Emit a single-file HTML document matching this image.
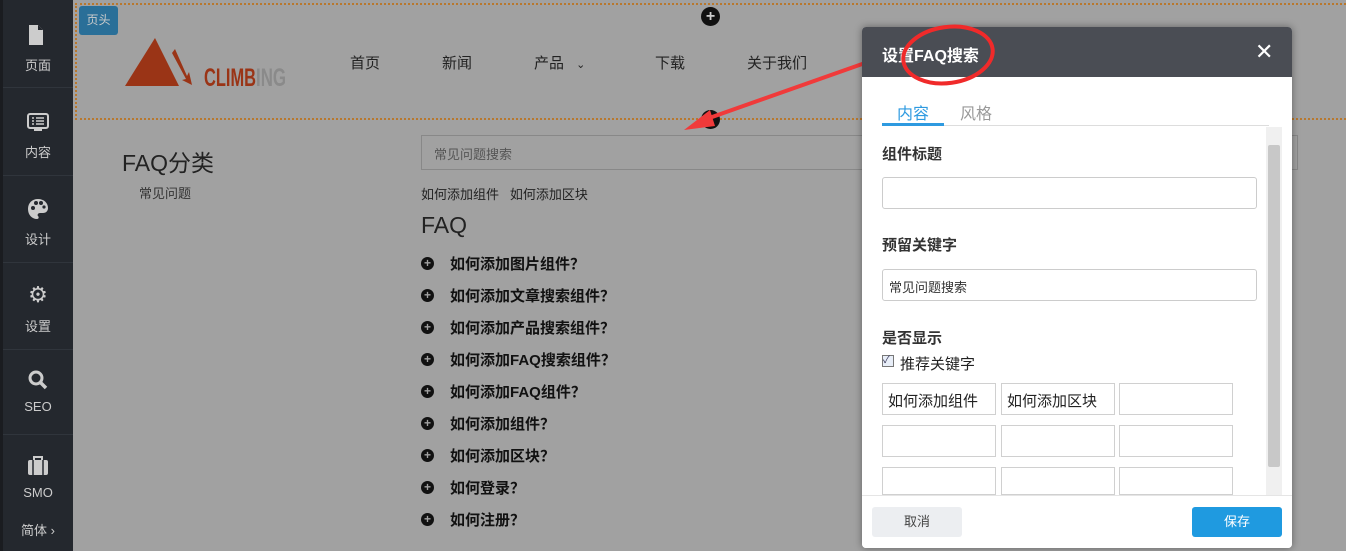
<!DOCTYPE html>
<html><head><meta charset="utf-8"><style>
*{margin:0;padding:0;box-sizing:border-box}
body{width:1346px;height:551px;overflow:hidden;background:#a1a1a1;font-family:"Liberation Sans","Noto Sans CJK SC",sans-serif;position:relative;color:#222}
.a{position:absolute}
.sb{left:0;top:0;width:73px;height:551px;background:#24282e;border-left:3px solid #1a1c20}
.it{position:absolute;left:0;width:70px;text-align:center;color:#ccc;font-size:13px}
.sep{position:absolute;left:0;width:70px;height:1px;background:#30353c}
.hdr{left:75px;top:3px;width:1275px;height:117px;border:2px dotted #b8782e}
.nav{font-size:15px;color:#222;top:52px}
.faq{font-size:15px;font-weight:bold;color:#111;left:450px}
.pl{position:absolute;left:421px;width:13px;height:13px;border-radius:50%;background:#111;color:#a1a1a1;font-size:12px;line-height:13px;text-align:center;font-weight:bold}
.dlg{left:862px;top:27px;width:430px;height:521px;background:#fff;border-radius:4px;box-shadow:0 0 8px rgba(0,0,0,.4);overflow:hidden}
.inp{position:absolute;border:1px solid #ccc;border-radius:3px;background:#fff;font-size:13px;color:#333}
.lab{position:absolute;left:20px;font-size:15px;font-weight:bold;color:#333}
.cell{position:absolute;border:1px solid #d0d0d0;background:#fff;width:114px;height:32px;font-size:15px;color:#222;padding:6px 0 0 5px}
</style></head><body>
<div class="a sb">
<svg class="a" style="left:24px;top:25px" width="18" height="20" viewBox="0 0 18 20"><path d="M2 0h9l5 5v15H2z" fill="#ccc"/><path d="M11 0v5h5" fill="#24282e"/></svg>
<div class="it" style="top:55px">页面</div><div class="sep" style="top:87px"></div>
<svg class="a" style="left:24px;top:113px" width="22" height="20"><rect x="1" y="1" width="20" height="14" rx="2" fill="none" stroke="#ccc" stroke-width="2"/><path d="M5 5h2M9 5h8M5 8h2M9 8h8M5 11h2M9 11h8" stroke="#ccc" stroke-width="1.5"/><rect x="7" y="16" width="8" height="2" fill="#ccc"/></svg>
<div class="it" style="top:142px">内容</div><div class="sep" style="top:175px"></div>
<svg class="a" style="left:24px;top:198px" width="22" height="22" viewBox="0 0 22 22"><path d="M11 1C5 1 1 5 1 11s4 10 9 10c2 0 2-2 1-3s0-3 2-3h3c3 0 5-2 5-5C21 5 17 1 11 1z" fill="#ccc"/><circle cx="6" cy="10" r="2" fill="#24282e"/><circle cx="9" cy="5" r="2" fill="#24282e"/><circle cx="14" cy="5" r="2" fill="#24282e"/><circle cx="17" cy="9" r="1.6" fill="#24282e"/></svg>
<div class="it" style="top:229px">设计</div><div class="sep" style="top:262px"></div>
<div class="it" style="top:282px;font-size:22px">⚙</div>
<div class="it" style="top:316px">设置</div><div class="sep" style="top:349px"></div>
<svg class="a" style="left:25px;top:370px" width="20" height="20"><circle cx="8" cy="8" r="6" fill="none" stroke="#ccc" stroke-width="3"/><path d="M12 12l6 6" stroke="#ccc" stroke-width="3.5"/></svg>
<div class="it" style="top:399px">SEO</div><div class="sep" style="top:434px"></div>
<svg class="a" style="left:24px;top:456px" width="22" height="20"><rect x="1" y="4" width="20" height="15" rx="2" fill="#ccc"/><rect x="7" y="1" width="8" height="4" fill="none" stroke="#ccc" stroke-width="2"/><path d="M6 4v15M16 4v15" stroke="#24282e" stroke-width="1.5"/></svg>
<div class="it" style="top:485px">SMO</div>
<div class="it" style="top:520px">简体 ›</div>
</div>
<div class="a hdr"></div>
<div class="a" style="left:79px;top:6px;width:39px;height:29px;background:#2a6f98;border-radius:3px;color:#ccc;font-size:12px;text-align:center;line-height:29px">页头</div>
<div class="a" style="left:701px;top:7px;width:19px;height:19px;border-radius:50%;background:#111;color:#ccc;text-align:center;line-height:19px;font-weight:bold">+</div>
<div class="a" style="left:701px;top:110px;width:19px;height:19px;border-radius:50%;background:#111"></div>
<svg class="a" style="left:124px;top:36px" width="170" height="52"><path d="M1 50L31 2L55 50z" fill="#9a3416"/><path d="M48 17l3-4 12 27 2-4 3 13-10-5 4-1z" fill="#9a3416"/><text x="80" y="50" font-family="Liberation Sans" font-weight="bold" font-size="25" fill="#9a3416" textLength="52" lengthAdjust="spacingAndGlyphs">CLIMB</text><text x="132" y="50" font-family="Liberation Sans" font-weight="bold" font-size="25" fill="#8a8a8a" textLength="30" lengthAdjust="spacingAndGlyphs">ING</text></svg>
<div class="a nav" style="left:350px">首页</div>
<div class="a nav" style="left:442px">新闻</div>
<div class="a nav" style="left:534px">产品 <span style="font-size:11px;margin-left:8px">⌄</span></div>
<div class="a nav" style="left:655px">下载</div>
<div class="a nav" style="left:747px">关于我们</div>
<div class="a" style="left:122px;top:144px;font-size:23px;color:#222">FAQ分类</div>
<div class="a" style="left:139px;top:183px;font-size:13px;color:#333">常见问题</div>
<div class="a" style="left:421px;top:135px;width:877px;height:35px;border:1px solid #888;font-size:13px;color:#555;padding:8px 12px">常见问题搜索</div>
<div class="a" style="left:421px;top:184px;font-size:13px;color:#222">如何添加组件&nbsp;&nbsp;&nbsp;如何添加区块</div>
<div class="a" style="left:421px;top:212px;font-size:23px;color:#222">FAQ</div>
<div class="pl" style="top:257px">+</div><div class="a faq" style="top:253px">如何添加图片组件？</div>
<div class="pl" style="top:289px">+</div><div class="a faq" style="top:285px">如何添加文章搜索组件？</div>
<div class="pl" style="top:321px">+</div><div class="a faq" style="top:317px">如何添加产品搜索组件？</div>
<div class="pl" style="top:353px">+</div><div class="a faq" style="top:349px">如何添加FAQ搜索组件？</div>
<div class="pl" style="top:385px">+</div><div class="a faq" style="top:381px">如何添加FAQ组件？</div>
<div class="pl" style="top:417px">+</div><div class="a faq" style="top:413px">如何添加组件？</div>
<div class="pl" style="top:449px">+</div><div class="a faq" style="top:445px">如何添加区块？</div>
<div class="pl" style="top:481px">+</div><div class="a faq" style="top:477px">如何登录？</div>
<div class="pl" style="top:513px">+</div><div class="a faq" style="top:509px">如何注册？</div>
<svg class="a" style="left:680px;top:60px" width="190" height="75"><path d="M185 3L18 62" stroke="#f03a3a" stroke-width="4"/><path d="M4 70L30 50L35 66z" fill="#f03a3a"/></svg>
<div class="a dlg">
<div class="a" style="left:0;top:0;width:430px;height:50px;background:#4a4d54"></div>
<div class="a" style="left:20px;top:15px;font-size:16px;font-weight:bold;color:#fff">设置FAQ搜索</div>
<div class="a" style="left:393px;top:12px;font-size:22px;color:#fff">✕</div>
<div class="a" style="left:35px;top:73px;font-size:16px;color:#2e9ae0">内容</div>
<div class="a" style="left:98px;top:73px;font-size:16px;color:#999">风格</div>
<div class="a" style="left:20px;top:96px;width:62px;height:3px;background:#2e9ae0"></div>
<div class="a" style="left:82px;top:98px;width:325px;height:1px;background:#ddd"></div>
<div class="a" style="left:404px;top:100px;width:16px;height:368px;background:#f0f0f0"></div>
<div class="a" style="left:406px;top:118px;width:12px;height:322px;background:#c8c8c8;border-radius:2px"></div>
<div class="lab" style="top:116px">组件标题</div>
<div class="inp" style="left:20px;top:150px;width:375px;height:32px"></div>
<div class="lab" style="top:207px">预留关键字</div>
<div class="inp" style="left:20px;top:242px;width:375px;height:32px;padding:7px 6px">常见问题搜索</div>
<div class="lab" style="top:300px">是否显示</div>
<div class="a" style="left:20px;top:328px;width:12px;height:12px;border:1px solid #777;background:#e8eef8;font-size:10px;line-height:10px;color:#335">✓</div>
<div class="a" style="left:38px;top:326px;font-size:15px;color:#222">推荐关键字</div>
<div class="cell" style="left:20px;top:356px">如何添加组件</div>
<div class="cell" style="left:139px;top:356px">如何添加区块</div>
<div class="cell" style="left:257px;top:356px"></div>
<div class="cell" style="left:20px;top:398px"></div>
<div class="cell" style="left:139px;top:398px"></div>
<div class="cell" style="left:257px;top:398px"></div>
<div class="cell" style="left:20px;top:440px;height:28px"></div>
<div class="cell" style="left:139px;top:440px;height:28px"></div>
<div class="cell" style="left:257px;top:440px;height:28px"></div>
<div class="a" style="left:0;top:468px;width:430px;height:53px;background:#fff;border-top:1px solid #e5e5e5"></div>
<div class="a" style="left:10px;top:480px;width:90px;height:30px;background:#eceef1;border-radius:3px;text-align:center;line-height:30px;font-size:13px;color:#444">取消</div>
<div class="a" style="left:330px;top:480px;width:90px;height:30px;background:#1f9ae0;border-radius:3px;text-align:center;line-height:30px;font-size:13px;color:#fff">保存</div>
</div>
<svg class="a" style="left:900px;top:24px" width="100" height="65"><ellipse cx="48" cy="31" rx="45" ry="28" fill="none" stroke="#f02a2a" stroke-width="4" transform="rotate(-8 48 31)"/></svg>
</body></html>
